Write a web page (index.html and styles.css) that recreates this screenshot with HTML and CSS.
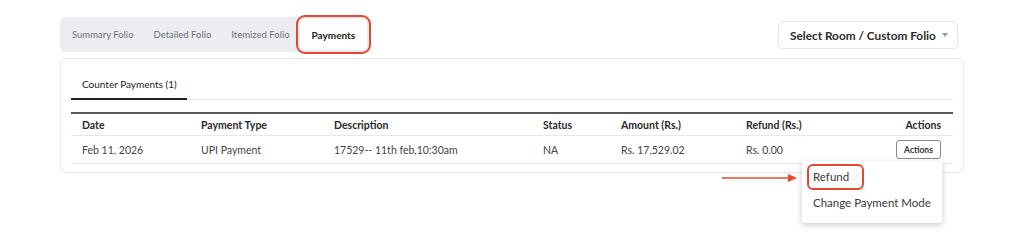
FILE: index.html
```html
<!DOCTYPE html>
<html>
<head>
<meta charset="utf-8">
<link rel="stylesheet" href="styles.css">
</head>
<body>
<div class="top">
  <div class="tabbar">
    <div class="tab">Summary Folio</div>
    <div class="tab">Detailed Folio</div>
    <div class="tab">Itemized Folio</div>
    <div class="tab active">Payments</div>
  </div>
  <button class="select">Select Room / Custom Folio <span class="caret"></span></button>
</div>
<div class="card">
  <div class="subtabs">
    <div class="subtab">Counter Payments (1)</div>
  </div>
  <table class="tbl">
    <colgroup>
      <col style="width:119px"><col style="width:133px"><col style="width:209px"><col style="width:78px"><col style="width:125px"><col>
    </colgroup>
    <thead>
      <tr><th>Date</th><th>Payment Type</th><th>Description</th><th>Status</th><th>Amount (Rs.)</th><th>Refund (Rs.)</th><th class="right">Actions</th></tr>
    </thead>
    <tbody>
      <tr>
        <td>Feb 11, 2026</td><td>UPI Payment</td><td>17529-- 11th feb,10:30am</td><td>NA</td><td>Rs. 17,529.02</td><td>Rs. 0.00</td>
        <td class="right actcell">
          <button class="actbtn">Actions</button>
          <div class="menu">
            <div class="item"><span class="hl">Refund</span></div>
            <div class="item">Change Payment Mode</div>
          </div>
          <svg class="arrow" width="76" height="10" viewBox="0 0 76 10"><line x1="0" y1="5" x2="68" y2="5" stroke="#e5472f" stroke-width="1.6"/><path d="M66 1 L75 5 L66 9 Z" fill="#e5472f"/></svg>
        </td>
      </tr>
    </tbody>
  </table>
</div>
</body>
</html>
```
FILE: styles.css
```css
* { box-sizing: border-box; }
body {
  margin: 0;
  background: #fff;
  font-family: "Lato", "Noto Sans", sans-serif;
  color: #333;
  width: 1024px;
  height: 247px;
  overflow: hidden;
}
.top {
  display: flex;
  align-items: center;
  justify-content: space-between;
  padding: 17px 66px 0 60px;
}
.tabbar {
  display: flex;
  align-items: stretch;
  background: #ebedf0;
  border-radius: 6px;
  padding: 2px;
  height: 35px;
}
.tab {
  display: flex;
  align-items: center;
  padding: 0 10px;
  font-size: 9.5px;
  color: #6f7378;
  white-space: nowrap;
}
.tab.active {
  background: #fff;
  color: #222;
  font-weight: 700;
  font-size: 10px;
  padding: 0 12px;
  border-radius: 5px;
  outline: 2px solid #e5472f;
  outline-offset: 2px;
}
.select {
  display: flex;
  align-items: center;
  height: 28px;
  width: 180px;
  margin-top: 1px;
  padding: 0 9px 0 11px;
  background: #fff;
  border: 1px solid #e2e4e8;
  border-radius: 5px;
  font-family: inherit;
  font-size: 11.8px;
  font-weight: 700;
  color: #2b2b2b;
  white-space: nowrap;
  justify-content: space-between;
}
.caret {
  width: 0; height: 0;
  border-left: 3.5px solid transparent;
  border-right: 3.5px solid transparent;
  border-top: 4px solid #999;
}
.card {
  margin: 6px 0 0 60px;
  width: 904px;
  border: 1px solid #e6e8eb;
  border-radius: 6px;
  padding: 11px 10px 8px 10px;
}
.subtabs {
  border-bottom: 1px solid #e3e5e8;
  display: flex;
}
.subtab {
  font-size: 10px;
  color: #222;
  padding: 8px 11px 8px 11px;
  width: 116px;
  white-space: nowrap;
  border-bottom: 2px solid #222;
  margin-bottom: -1px;
}
.tbl {
  width: 100%;
  margin-top: 12px;
  border-collapse: collapse;
  table-layout: fixed;
  font-size: 10.5px;
}
.tbl thead tr { border-top: 2px solid #5a5a5a; }
.tbl th {
  text-align: left;
  font-weight: 700;
  color: #2a2a2a;
  height: 22px;
  padding: 1px 11px 0;
  border-bottom: 1px solid #e6e8eb;
  white-space: nowrap;
}
.tbl td {
  height: 28px;
  padding: 1px 11px 0;
  color: #444;
  border-bottom: 1px solid #e6e8eb;
  white-space: nowrap;
}
.tbl .right { text-align: right; padding-right: 12px; }
.actcell { position: relative; }
.actbtn {
  height: 19px;
  width: 45px;
  padding: 0;
  border: 1px solid #8a8a8a;
  border-radius: 3px;
  background: #fff;
  font-family: inherit;
  font-size: 8.5px;
  font-weight: 700;
  color: #333;
}
.menu {
  position: absolute;
  top: 25px;
  right: 11px;
  width: 140px;
  background: #fff;
  border-radius: 3px;
  box-shadow: 0 2px 6px rgba(0,0,0,0.22);
  padding: 3px 0 7px;
  text-align: left;
  z-index: 2;
}
.item {
  font-size: 11.5px;
  color: #3a3a3a;
  padding: 0 0 0 5px;
  height: 26px;
  display: flex;
  align-items: center;
}
.hl {
  display: inline-block;
  border: 2px solid #e5472f;
  border-radius: 6px;
  padding: 4px 13px 5px 4px;
}
.item + .item { padding-left: 11px; }
.arrow {
  position: absolute;
  top: 37px;
  right: 155px;
}
```
